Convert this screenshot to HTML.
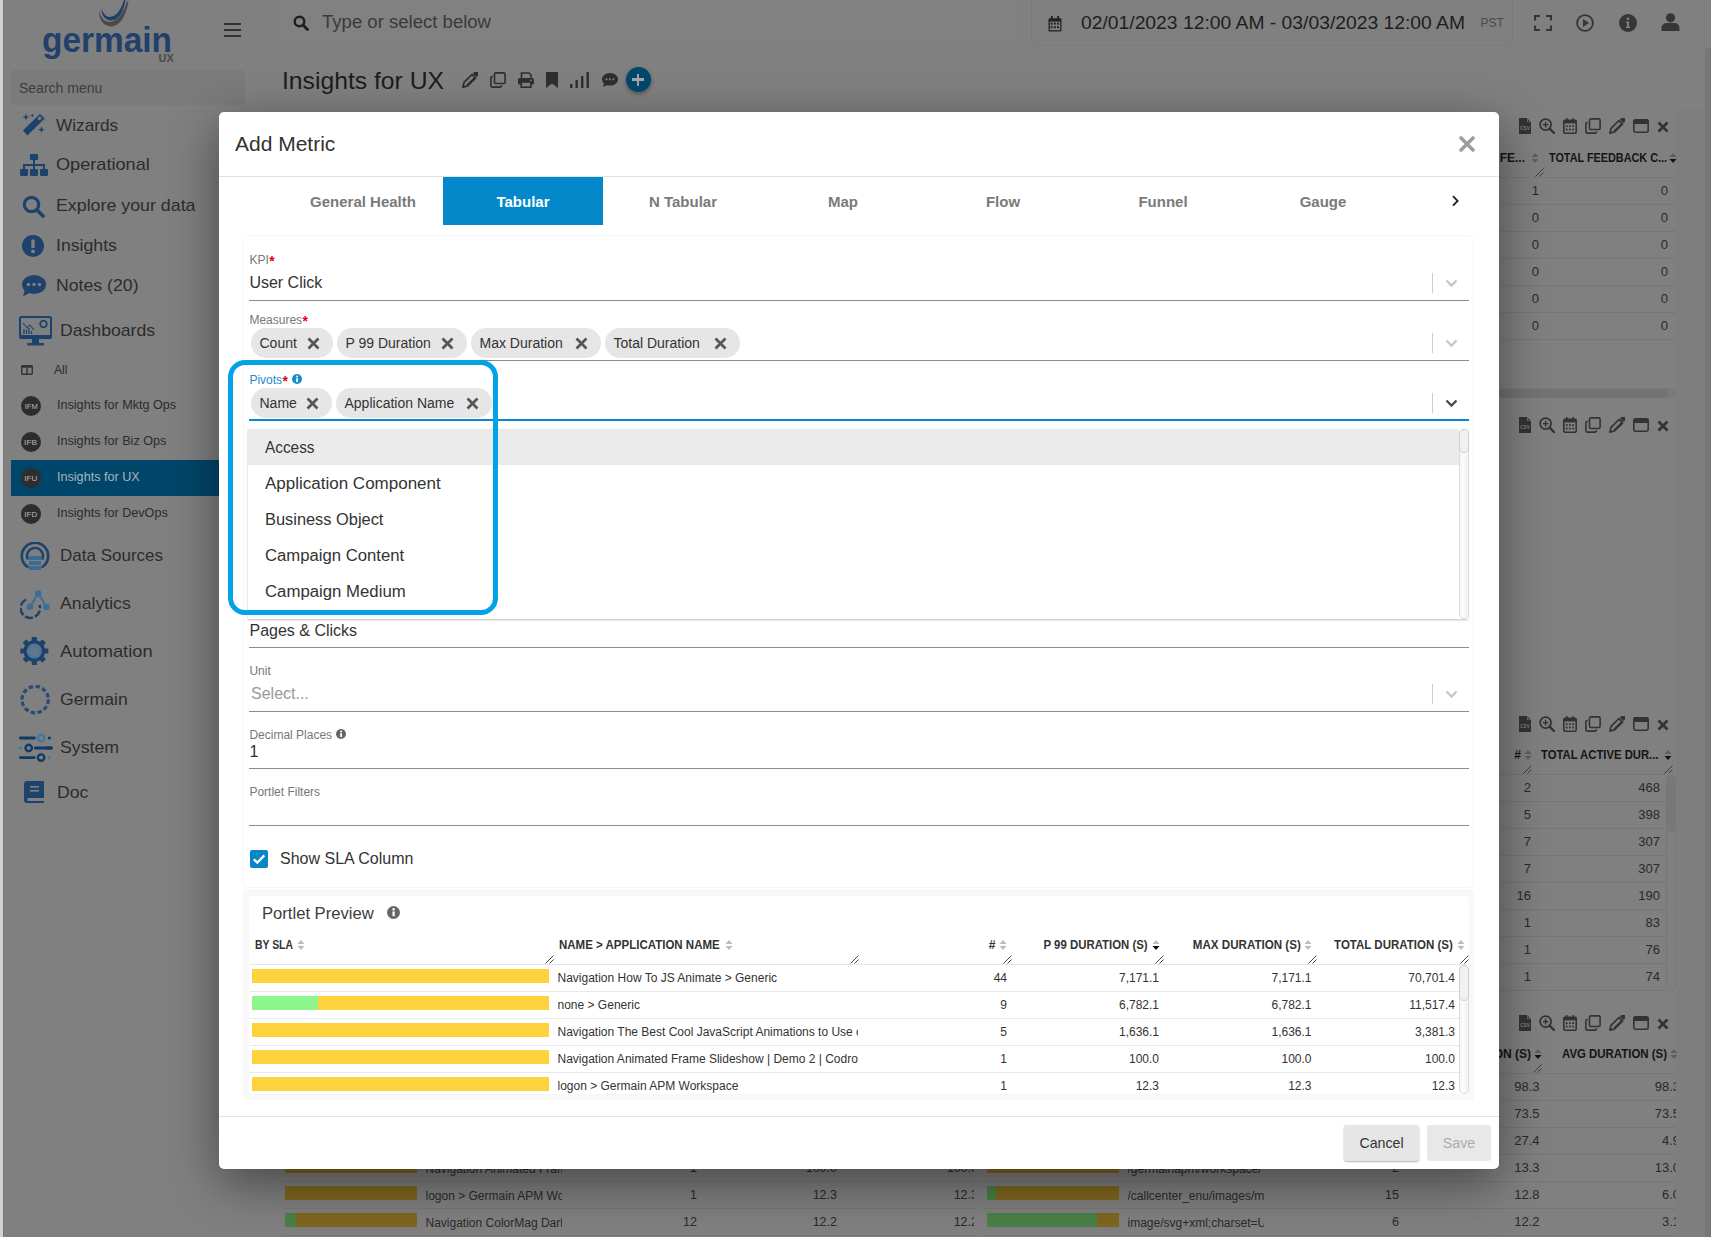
<!DOCTYPE html><html><head><meta charset="utf-8"><style>
html,body{margin:0;padding:0;width:1711px;height:1237px;overflow:hidden;background:#808080;font-family:"Liberation Sans",sans-serif;}
.r{position:absolute;display:block;}
.t{position:absolute;white-space:nowrap;line-height:1;}
#modal{position:absolute;left:219px;top:112px;width:1280px;height:1057px;background:#fff;border-radius:5px;box-shadow:0 14px 50px rgba(0,0,0,0.45);overflow:hidden;}
</style></head><body>

<div class="r" style="left:0px;top:0px;width:3px;height:1237px;background:#d0d0d0;"></div>
<div class="r" style="left:3px;top:0px;width:1px;height:1237px;background:#787878;"></div>
<svg class="r" style="left:96px;top:0px;" width="36" height="30" viewBox="0 0 36 30"><path d="M5.5 8 C5 17 11 22 18 20 C24 18 28 10 29.5 0 L28 0 C25.5 8 21.5 15 16 16.5 C10.5 18 7 14 5.5 8 Z" fill="#20406a"/><path d="M3 10 C2.5 22 10 28 18 26 C26 24 31 12 32.5 1 L31 1.5 C28 11 23 20 16 21.5 C9 23 4.5 18 3 10 Z" fill="#4a4a4a"/></svg>
<div class="t" style="left:42.00px;top:21.87px;font-size:35px;color:#21406a;font-weight:bold;transform:scaleX(0.9548);transform-origin:left top;">germain</div>
<div class="t" style="left:158.50px;top:53.19px;font-size:11px;color:#4a4a4a;font-weight:bold;">UX</div>
<div class="r" style="left:224px;top:22.8px;width:17px;height:2.3px;background:#333;"></div>
<div class="r" style="left:224px;top:28.7px;width:17px;height:2.3px;background:#333;"></div>
<div class="r" style="left:224px;top:34.6px;width:17px;height:2.3px;background:#333;"></div>
<div class="r" style="left:11px;top:70px;width:234px;height:35px;background:#7b7b7b;border-radius:4px;"></div>
<div class="t" style="left:19.00px;top:81.15px;font-size:14px;color:#3b3b3b;">Search menu</div>
<div class="t" style="left:56.30px;top:116.51px;font-size:17px;color:#2c2c2c;transform:scaleX(1.0115);transform-origin:left top;">Wizards</div>
<div class="t" style="left:56.30px;top:156.41px;font-size:17px;color:#2c2c2c;transform:scaleX(1.0673);transform-origin:left top;">Operational</div>
<div class="t" style="left:56.30px;top:197.11px;font-size:17px;color:#2c2c2c;transform:scaleX(1.0470);transform-origin:left top;">Explore your data</div>
<div class="t" style="left:56.30px;top:237.11px;font-size:17px;color:#2c2c2c;transform:scaleX(1.0400);transform-origin:left top;">Insights</div>
<div class="t" style="left:56.30px;top:277.11px;font-size:17px;color:#2c2c2c;transform:scaleX(1.0400);transform-origin:left top;">Notes (20)</div>
<div class="t" style="left:59.80px;top:321.71px;font-size:17px;color:#2c2c2c;transform:scaleX(1.0364);transform-origin:left top;">Dashboards</div>
<div class="t" style="left:59.80px;top:546.61px;font-size:17px;color:#2c2c2c;transform:scaleX(1.0001);transform-origin:left top;">Data Sources</div>
<div class="t" style="left:59.80px;top:594.71px;font-size:17px;color:#2c2c2c;transform:scaleX(1.0400);transform-origin:left top;">Analytics</div>
<div class="t" style="left:59.80px;top:642.71px;font-size:17px;color:#2c2c2c;transform:scaleX(1.0769);transform-origin:left top;">Automation</div>
<div class="t" style="left:59.80px;top:690.81px;font-size:17px;color:#2c2c2c;transform:scaleX(1.0400);transform-origin:left top;">Germain</div>
<div class="t" style="left:59.80px;top:738.91px;font-size:17px;color:#2c2c2c;transform:scaleX(1.0400);transform-origin:left top;">System</div>
<div class="t" style="left:56.80px;top:783.51px;font-size:17px;color:#2c2c2c;transform:scaleX(1.0400);transform-origin:left top;">Doc</div>
<svg class="r" style="left:22px;top:113px;" width="24" height="24" viewBox="0 0 24 24"><path d="M0.9 17.5 L5.4 22.6 L22.7 5.6 L17.9 1.1 Z" fill="#1d436c"/><path d="M15.4 5.6 L17.4 7.6 L19.9 5.2 L17.9 3.2 Z" fill="#808080"/><path d="M3.9 0.7 L4.852 3.148 L7.3 4.1 L4.852 5.052 L3.9 7.5 L2.948 5.052 L0.5 4.1 L2.948 3.148 Z M10.3 0.6 L10.86 2.04 L12.3 2.6 L10.86 3.16 L10.3 4.6 L9.74 3.16 L8.3 2.6 L9.74 2.04 Z M19.4 13.2 L20.352 15.648 L22.8 16.6 L20.352 17.552 L19.4 20 L18.448 17.552 L16 16.6 L18.448 15.648 Z" fill="#1d436c"/></svg>
<svg class="r" style="left:20px;top:154px;" width="28" height="22" viewBox="0 0 28 22"><rect x="10" y="0" width="8" height="6" rx="1" fill="#1d436c"/><path d="M14 6 V10 M4 15 V11 H24 V15 M14 11 V15" stroke="#1d436c" stroke-width="2" fill="none"/><rect x="0" y="15" width="8" height="7" rx="1" fill="#1d436c"/><rect x="10" y="15" width="8" height="7" rx="1" fill="#1d436c"/><rect x="20" y="15" width="8" height="7" rx="1" fill="#1d436c"/></svg>
<svg class="r" style="left:22px;top:195px;" width="23" height="23" viewBox="0 0 23 23"><circle cx="9.5" cy="9.5" r="7.2" fill="none" stroke="#1d436c" stroke-width="3.2"/><path d="M15 15 L21 21" stroke="#1d436c" stroke-width="3.6" stroke-linecap="round"/></svg>
<svg class="r" style="left:22px;top:235px;" width="22" height="22" viewBox="0 0 22 22"><circle cx="11" cy="11" r="11" fill="#1d436c"/><rect x="9.3" y="4.5" width="3.4" height="8.5" rx="1.2" fill="#808080"/><circle cx="11" cy="16.3" r="1.9" fill="#808080"/></svg>
<svg class="r" style="left:22px;top:275px;" width="24" height="22" viewBox="0 0 24 22"><ellipse cx="12" cy="9.5" rx="12" ry="9.5" fill="#1d436c"/><path d="M3 14 L1 21.5 L9 17 Z" fill="#1d436c"/><circle cx="6.5" cy="9.5" r="1.7" fill="#808080"/><circle cx="12" cy="9.5" r="1.7" fill="#808080"/><circle cx="17.5" cy="9.5" r="1.7" fill="#808080"/></svg>
<svg class="r" style="left:19px;top:316px;" width="33" height="30" viewBox="0 0 33 30"><rect x="1" y="1" width="31" height="21" rx="1.5" fill="none" stroke="#1d436c" stroke-width="2"/><rect x="1" y="19" width="31" height="3.5" fill="#1d436c"/><rect x="13" y="23" width="7" height="4" fill="#1d436c"/><rect x="8" y="27" width="17" height="2.5" rx="1" fill="#1d436c"/><circle cx="24.5" cy="8" r="3.3" fill="none" stroke="#1d436c" stroke-width="1.8"/><path d="M4 7 L8 12 L11 9 L15 14" stroke="#1d436c" stroke-width="1.1" fill="none"/><path d="M5 18 V13 M7.5 18 V14 M10 18 V12 M12.5 18 V15" stroke="#1d436c" stroke-width="1.3"/></svg>
<svg class="r" style="left:21px;top:365px;" width="12" height="10" viewBox="0 0 12 10"><rect x="0.7" y="0.7" width="10.6" height="8.6" rx="1" fill="none" stroke="#333" stroke-width="1.4"/><path d="M6 1 V9" stroke="#333" stroke-width="1.4"/><rect x="0.7" y="0.7" width="10.6" height="2" fill="#333"/></svg>
<div class="t" style="left:54.00px;top:364.44px;font-size:12px;color:#2c2c2c;">All</div>
<div class="r" style="left:11px;top:460px;width:208px;height:36px;background:#00466a;"></div>
<div class="r" style="left:21px;top:396px;width:20px;height:20px;border-radius:50%;background:#2d2d2d;"></div>
<div class="t" style="left:24.80px;top:402.51px;font-size:7.2px;color:#b8b8b8;transform:scaleX(1.0488);transform-origin:center top;">IFM</div>
<div class="t" style="left:57.30px;top:398.30px;font-size:13px;color:#2c2c2c;transform:scaleX(0.9700);transform-origin:left top;">Insights for Mktg Ops</div>
<div class="r" style="left:21px;top:432px;width:20px;height:20px;border-radius:50%;background:#2d2d2d;"></div>
<div class="t" style="left:25.40px;top:438.51px;font-size:7.2px;color:#b8b8b8;transform:scaleX(1.1607);transform-origin:center top;">IFB</div>
<div class="t" style="left:57.30px;top:434.30px;font-size:13px;color:#2c2c2c;transform:scaleX(0.9700);transform-origin:left top;">Insights for Biz Ops</div>
<div class="r" style="left:21px;top:468px;width:20px;height:20px;border-radius:50%;background:#2d2d2d;"></div>
<div class="t" style="left:25.20px;top:474.51px;font-size:7.2px;color:#b8b8b8;transform:scaleX(1.1209);transform-origin:center top;">IFU</div>
<div class="t" style="left:57.30px;top:470.30px;font-size:13px;color:#a9b4bb;transform:scaleX(0.9700);transform-origin:left top;">Insights for UX</div>
<div class="r" style="left:21px;top:504px;width:20px;height:20px;border-radius:50%;background:#2d2d2d;"></div>
<div class="t" style="left:25.20px;top:510.51px;font-size:7.2px;color:#b8b8b8;transform:scaleX(1.1209);transform-origin:center top;">IFD</div>
<div class="t" style="left:57.30px;top:506.30px;font-size:13px;color:#2c2c2c;transform:scaleX(0.9700);transform-origin:left top;">Insights for DevOps</div>
<svg class="r" style="left:20px;top:542px;" width="30" height="30" viewBox="0 0 30 30"><path d="M7.4 24.8 A13.2 13.2 0 1 1 22.6 24.8" fill="none" stroke="#1d436c" stroke-width="2.6" stroke-linecap="round"/><path d="M7.5 16.7 A8 8 0 1 1 22.5 16.7" fill="none" stroke="#1d436c" stroke-width="2.4" stroke-linecap="round"/><rect x="9" y="14" width="12" height="4" fill="#3a6b94"/><rect x="9" y="19" width="12" height="4" fill="#3a6b94"/><rect x="9" y="24" width="12" height="4" fill="#3a6b94"/></svg>
<svg class="r" style="left:20px;top:590px;" width="31" height="30" viewBox="0 0 31 30"><path d="M6 9.5 A9.7 9.7 0 1 0 19.5 15" fill="none" stroke="#1d436c" stroke-width="2.5" stroke-dasharray="8 2.2"/><path d="M10 16.7 L18.2 3.3 L26.4 17" fill="none" stroke="#3a6f9a" stroke-width="2"/><circle cx="18.2" cy="3.5" r="3.3" fill="#3a6f9a"/><circle cx="10" cy="16.7" r="3.3" fill="#3a6f9a"/><circle cx="26.4" cy="17" r="3.3" fill="#3a6f9a"/></svg>
<svg class="r" style="left:20px;top:637px;" width="29" height="29" viewBox="0 0 29 29"><g transform="translate(14.3 14)"><rect x="-2.6" y="-14" width="5.2" height="6" rx="0.6" fill="#1d436c" transform="rotate(0)"/><rect x="-2.6" y="-14" width="5.2" height="6" rx="0.6" fill="#1d436c" transform="rotate(45)"/><rect x="-2.6" y="-14" width="5.2" height="6" rx="0.6" fill="#1d436c" transform="rotate(90)"/><rect x="-2.6" y="-14" width="5.2" height="6" rx="0.6" fill="#1d436c" transform="rotate(135)"/><rect x="-2.6" y="-14" width="5.2" height="6" rx="0.6" fill="#1d436c" transform="rotate(180)"/><rect x="-2.6" y="-14" width="5.2" height="6" rx="0.6" fill="#1d436c" transform="rotate(225)"/><rect x="-2.6" y="-14" width="5.2" height="6" rx="0.6" fill="#1d436c" transform="rotate(270)"/><rect x="-2.6" y="-14" width="5.2" height="6" rx="0.6" fill="#1d436c" transform="rotate(315)"/><circle r="10.8" fill="#1d436c"/><circle r="7.6" fill="#62768c"/><circle r="6" fill="none" stroke="#4478a4" stroke-width="1.5" stroke-dasharray="15 4"/></g></svg>
<svg class="r" style="left:20px;top:685px;" width="31" height="30" viewBox="0 0 31 30"><circle cx="15.2" cy="14.6" r="13.2" fill="none" stroke="#284a75" stroke-width="3.2" stroke-dasharray="4.4 2.5"/></svg>
<svg class="r" style="left:18px;top:732px;" width="36" height="30" viewBox="0 0 36 30"><g stroke-linecap="round"><path d="M2.4 6 H16.4 M28.8 16 H33.6 M2.4 25.6 H16.4" stroke="#0e3a66" stroke-width="2.8"/></g><circle cx="23.1" cy="6" r="3.2" fill="none" stroke="#3f78a3" stroke-width="2.4"/><circle cx="31.4" cy="6" r="1.6" fill="#0e3a66"/><circle cx="2.5" cy="16" r="1.6" fill="#3f78a3"/><circle cx="10.7" cy="16" r="3.2" fill="none" stroke="#0e3a66" stroke-width="2.4"/><path d="M17.2 16 H33" stroke="#0e3a66" stroke-width="2.8" stroke-linecap="round"/><circle cx="23.1" cy="25.6" r="3.2" fill="none" stroke="#0e3a66" stroke-width="2.4"/><circle cx="31.4" cy="25.6" r="1.6" fill="#3f78a3"/></svg>
<svg class="r" style="left:24px;top:781px;" width="20" height="22" viewBox="0 0 20 22"><path d="M3 0 H20 V17 H4 A1.8 1.8 0 0 0 4 20 H20 V22 H3 A3 3 0 0 1 0 19 V3 A3 3 0 0 1 3 0 Z" fill="#1d436c"/><rect x="6" y="5" width="9" height="1.6" fill="#808080"/><rect x="6" y="9" width="9" height="1.6" fill="#808080"/></svg>
<div class="r" style="left:279px;top:-6px;width:743px;height:52px;background:#818181;border-radius:6px;"></div>
<svg class="r" style="left:293px;top:15px;" width="16" height="16" viewBox="0 0 16 16"><circle cx="6.5" cy="6.5" r="4.8" fill="none" stroke="#1e1e1e" stroke-width="2.4"/><path d="M10 10 L14.5 14.5" stroke="#1e1e1e" stroke-width="2.8" stroke-linecap="round"/></svg>
<div class="t" style="left:322.00px;top:13.36px;font-size:18px;color:#3a3a3a;transform:scaleX(1.0300);transform-origin:left top;">Type or select below</div>
<div class="r" style="left:1031px;top:-6px;width:482px;height:52px;border:1px solid #7a7a7a;border-radius:6px;box-sizing:border-box;"></div>
<svg class="r" style="left:1048px;top:16px;" width="14" height="16" viewBox="0 0 14 16"><rect x="0.5" y="2.2" width="13" height="13.3" rx="1.2" fill="#222"/><rect x="3" y="0" width="1.8" height="3.5" fill="#222"/><rect x="9.2" y="0" width="1.8" height="3.5" fill="#222"/><rect x="1.8" y="5.6" width="10.4" height="8.6" fill="#808080"/><rect x="2.6" y="6.6" width="2" height="2" fill="#222"/><rect x="2.6" y="10.2" width="2" height="2" fill="#222"/><rect x="5.8" y="6.6" width="2" height="2" fill="#222"/><rect x="5.8" y="10.2" width="2" height="2" fill="#222"/><rect x="9" y="6.6" width="2" height="2" fill="#222"/><rect x="9" y="10.2" width="2" height="2" fill="#222"/></svg>
<div class="t" style="left:1080.50px;top:13.42px;font-size:19px;color:#1e1e1e;transform:scaleX(1.0155);transform-origin:left top;">02/01/2023 12:00 AM - 03/03/2023 12:00 AM</div>
<div class="t" style="left:1480.60px;top:16.84px;font-size:12px;color:#4a4a4a;">PST</div>
<svg class="r" style="left:1534px;top:15px;" width="18" height="16" viewBox="0 0 18 16"><path d="M1 5.5 V1 H6 M12 1 H17 V5.5 M17 10.5 V15 H12 M6 15 H1 V10.5" fill="none" stroke="#363636" stroke-width="2.2"/></svg>
<svg class="r" style="left:1576px;top:14px;" width="18" height="18" viewBox="0 0 18 18"><circle cx="9" cy="9" r="7.9" fill="none" stroke="#363636" stroke-width="1.8"/><path d="M7 5 L13 9 L7 13 Z" fill="#363636"/></svg>
<svg class="r" style="left:1619px;top:14px;" width="18" height="18" viewBox="0 0 18 18"><circle cx="9" cy="9" r="9" fill="#363636"/><circle cx="9" cy="4.8" r="1.4" fill="#808080"/><path d="M7 7.5 H10 V12.5 H11 V14 H7 V12.5 H8 V9 H7 Z" fill="#808080"/></svg>
<svg class="r" style="left:1661px;top:13px;" width="19" height="18" viewBox="0 0 19 18"><circle cx="9.5" cy="4.8" r="4.6" fill="#363636"/><path d="M0.5 18 V15 A5 5 0 0 1 5.5 10 H13.5 A5 5 0 0 1 18.5 15 V18 Z" fill="#363636"/></svg>
<div class="r" style="left:1705px;top:48px;width:6px;height:1189px;background:#767676;border-radius:4px 0 0 0;"></div>
<div class="t" style="left:282.00px;top:68.68px;font-size:24px;color:#1c1c1c;transform:scaleX(1.0293);transform-origin:left top;">Insights for UX</div>
<svg class="r" style="left:462px;top:72px;" width="16" height="16" viewBox="0 0 16 16"><g transform="translate(0.7 15.3) rotate(-45)"><path d="M0.3 0 L4.4 -2.5 H15.6 V2.5 H4.4 Z" fill="none" stroke="#2e2e2e" stroke-width="1.7" stroke-linejoin="round"/><path d="M4.4 0.9 H15.6 V2.5 H4.4 Z" fill="#2e2e2e"/><path d="M0 0 L2.4 -1.4 V1.4 Z" fill="#2e2e2e"/><rect x="16.8" y="-2.6" width="4.8" height="5.2" rx="0.9" fill="#2e2e2e"/></g></svg>
<svg class="r" style="left:490px;top:72px;" width="16" height="16" viewBox="0 0 16 16"><rect x="4.5" y="0.9" width="10.6" height="10.6" rx="1.3" fill="none" stroke="#2e2e2e" stroke-width="1.6"/><path d="M2.8 4.5 H2.2 A1.3 1.3 0 0 0 0.9 5.8 V13.8 A1.3 1.3 0 0 0 2.2 15.1 H10.2 A1.3 1.3 0 0 0 11.5 13.8 V13.2" fill="none" stroke="#2e2e2e" stroke-width="1.6"/></svg>
<svg class="r" style="left:518px;top:72px;" width="16" height="16" viewBox="0 0 16 16"><path d="M3.5 6 V1 H11 L13 3 V6" fill="none" stroke="#2e2e2e" stroke-width="1.6"/><rect x="0" y="6" width="16" height="6.5" rx="1.5" fill="#2e2e2e"/><rect x="3.2" y="10" width="9.6" height="5.2" fill="#808080" stroke="#2e2e2e" stroke-width="1.6"/><circle cx="13" cy="8.3" r="0.9" fill="#808080"/></svg>
<svg class="r" style="left:546px;top:72px;" width="12" height="16" viewBox="0 0 12 16"><path d="M0 0 H12 V16 L6 11.5 L0 16 Z" fill="#2e2e2e"/></svg>
<svg class="r" style="left:570px;top:72px;" width="19" height="16" viewBox="0 0 19 16"><rect x="0" y="12" width="2.4" height="4" fill="#2e2e2e"/><rect x="5.5" y="8" width="2.4" height="8" fill="#2e2e2e"/><rect x="11" y="4" width="2.4" height="12" fill="#2e2e2e"/><rect x="16.5" y="0" width="2.4" height="16" fill="#2e2e2e"/></svg>
<svg class="r" style="left:602px;top:73px;" width="16" height="14" viewBox="0 0 16 14"><ellipse cx="8" cy="6.3" rx="8" ry="6.3" fill="#2e2e2e"/><path d="M2.5 9 L1 14 L6.5 11.5 Z" fill="#2e2e2e"/><circle cx="4.5" cy="6.3" r="1.1" fill="#808080"/><circle cx="8" cy="6.3" r="1.1" fill="#808080"/><circle cx="11.5" cy="6.3" r="1.1" fill="#808080"/></svg>
<div class="r" style="left:626px;top:67px;width:25px;height:25px;border-radius:50%;background:#00486d;box-shadow:0 2px 4px rgba(0,0,0,0.35);"></div>
<div class="r" style="left:636.7px;top:73.5px;width:2.6px;height:12px;background:#a6a6a6;"></div>
<div class="r" style="left:632px;top:78.2px;width:12px;height:2.6px;background:#a6a6a6;"></div>
<div class="r" style="left:1676px;top:109px;width:29px;height:1128px;background:#7e7e7e;"></div>
<svg class="r" style="left:1519px;top:118px;" width="12" height="16" viewBox="0 0 12 16"><path d="M0 0 H8 L12 4 V16 H0 Z" fill="#333"/><path d="M8 0 V4 H12" fill="#808080"/><path d="M8.6 0.8 V3.4 H11.2" fill="#333"/><text x="6" y="12.3" font-size="4.6" font-weight="bold" text-anchor="middle" fill="#808080" font-family="Liberation Sans">CSV</text></svg>
<svg class="r" style="left:1539px;top:118px;" width="16" height="16" viewBox="0 0 16 16"><circle cx="6.6" cy="6.6" r="5.5" fill="none" stroke="#333" stroke-width="1.7"/><path d="M10.6 10.6 L15 15" stroke="#333" stroke-width="2.4" stroke-linecap="round"/><path d="M6.6 3.8 V9.4 M3.8 6.6 H9.4" stroke="#333" stroke-width="1.4"/></svg>
<svg class="r" style="left:1563px;top:118px;" width="14" height="16" viewBox="0 0 14 16"><rect x="0.8" y="2.4" width="12.4" height="12.8" rx="1.2" fill="none" stroke="#333" stroke-width="1.6"/><rect x="0.8" y="2.4" width="12.4" height="3" fill="#333"/><rect x="3" y="0" width="1.6" height="3.5" fill="#333"/><rect x="9.4" y="0" width="1.6" height="3.5" fill="#333"/><rect x="2.8" y="7.3" width="1.8" height="1.8" fill="#333"/><rect x="2.8" y="10.6" width="1.8" height="1.8" fill="#333"/><rect x="6" y="7.3" width="1.8" height="1.8" fill="#333"/><rect x="6" y="10.6" width="1.8" height="1.8" fill="#333"/><rect x="9.2" y="7.3" width="1.8" height="1.8" fill="#333"/><rect x="9.2" y="10.6" width="1.8" height="1.8" fill="#333"/></svg>
<svg class="r" style="left:1585px;top:118px;" width="16" height="16" viewBox="0 0 16 16"><rect x="4.5" y="0.9" width="10.6" height="10.6" rx="1.3" fill="none" stroke="#333" stroke-width="1.6"/><path d="M2.8 4.5 H2.2 A1.3 1.3 0 0 0 0.9 5.8 V13.8 A1.3 1.3 0 0 0 2.2 15.1 H10.2 A1.3 1.3 0 0 0 11.5 13.8 V13.2" fill="none" stroke="#333" stroke-width="1.6"/></svg>
<svg class="r" style="left:1609px;top:118px;" width="16" height="16" viewBox="0 0 16 16"><g transform="translate(0.7 15.3) rotate(-45)"><path d="M0.3 0 L4.4 -2.5 H15.6 V2.5 H4.4 Z" fill="none" stroke="#333" stroke-width="1.7" stroke-linejoin="round"/><path d="M4.4 0.9 H15.6 V2.5 H4.4 Z" fill="#333"/><path d="M0 0 L2.4 -1.4 V1.4 Z" fill="#333"/><rect x="16.8" y="-2.6" width="4.8" height="5.2" rx="0.9" fill="#333"/></g></svg>
<svg class="r" style="left:1633px;top:119px;" width="16" height="14" viewBox="0 0 16 14"><rect x="0.8" y="0.8" width="14.4" height="12.4" rx="1.6" fill="none" stroke="#333" stroke-width="1.6"/><rect x="0.8" y="0.8" width="14.4" height="4.2" rx="1" fill="#333"/></svg>
<svg class="r" style="left:1656.5px;top:120.5px;" width="12" height="12" viewBox="0 0 16 16"><path d="M2 2 L14 14 M14 2 L2 14" stroke="#333" stroke-width="3.6" stroke-linecap="butt"/></svg>
<div class="t" style="left:1488.33px;top:151.84px;font-size:12px;color:#151515;font-weight:bold;">E FE...</div>
<svg class="r" style="left:1531px;top:152px;" width="8" height="12" viewBox="0 0 8 12"><path d="M0.5 5 L4 1 L7.5 5 Z" fill="#5e5e5e"/><path d="M0.5 7 L4 11 L7.5 7 Z" fill="#5e5e5e"/></svg>
<div class="t" style="left:1549.00px;top:151.84px;font-size:12px;color:#151515;font-weight:bold;transform:scaleX(0.9031);transform-origin:left top;">TOTAL FEEDBACK C...</div>
<svg class="r" style="left:1669px;top:152px;" width="8" height="12" viewBox="0 0 8 12"><path d="M0.5 5 L4 1 L7.5 5 Z" fill="#5e5e5e"/><path d="M0.5 7 L4 11 L7.5 7 Z" fill="#111"/></svg>
<svg class="r" style="left:1535px;top:168px;" width="9" height="9" viewBox="0 0 9 9"><path d="M0.5 8.5 L8.5 0.5 M4.5 8.5 L8.5 4.5" stroke="#333" stroke-width="0.9"/></svg>
<div class="r" style="left:1499px;top:177px;width:177px;height:1px;background:#777777;"></div>
<div class="t" style="left:1531.77px;top:183.50px;font-size:13px;color:#2a2a2a;">1</div>
<div class="t" style="left:1660.77px;top:183.50px;font-size:13px;color:#2a2a2a;">0</div>
<div class="r" style="left:1499px;top:204px;width:177px;height:1px;background:#777777;"></div>
<div class="t" style="left:1531.77px;top:210.50px;font-size:13px;color:#2a2a2a;">0</div>
<div class="t" style="left:1660.77px;top:210.50px;font-size:13px;color:#2a2a2a;">0</div>
<div class="r" style="left:1499px;top:231px;width:177px;height:1px;background:#777777;"></div>
<div class="t" style="left:1531.77px;top:237.50px;font-size:13px;color:#2a2a2a;">0</div>
<div class="t" style="left:1660.77px;top:237.50px;font-size:13px;color:#2a2a2a;">0</div>
<div class="r" style="left:1499px;top:258px;width:177px;height:1px;background:#777777;"></div>
<div class="t" style="left:1531.77px;top:264.50px;font-size:13px;color:#2a2a2a;">0</div>
<div class="t" style="left:1660.77px;top:264.50px;font-size:13px;color:#2a2a2a;">0</div>
<div class="r" style="left:1499px;top:285px;width:177px;height:1px;background:#777777;"></div>
<div class="t" style="left:1531.77px;top:291.50px;font-size:13px;color:#2a2a2a;">0</div>
<div class="t" style="left:1660.77px;top:291.50px;font-size:13px;color:#2a2a2a;">0</div>
<div class="r" style="left:1499px;top:312px;width:177px;height:1px;background:#777777;"></div>
<div class="t" style="left:1531.77px;top:318.50px;font-size:13px;color:#2a2a2a;">0</div>
<div class="t" style="left:1660.77px;top:318.50px;font-size:13px;color:#2a2a2a;">0</div>
<div class="r" style="left:1499px;top:339px;width:177px;height:1px;background:#777777;"></div>
<div class="r" style="left:1499px;top:388px;width:177px;height:10px;background:#7a7a7a;border-radius:5px;"></div>
<div class="r" style="left:1499px;top:388.5px;width:169px;height:9px;background:#737373;border-radius:5px;"></div>
<div class="r" style="left:1499px;top:408px;width:177px;height:1px;background:#7d7d7d;"></div>
<svg class="r" style="left:1519px;top:417px;" width="12" height="16" viewBox="0 0 12 16"><path d="M0 0 H8 L12 4 V16 H0 Z" fill="#333"/><path d="M8 0 V4 H12" fill="#808080"/><path d="M8.6 0.8 V3.4 H11.2" fill="#333"/><text x="6" y="12.3" font-size="4.6" font-weight="bold" text-anchor="middle" fill="#808080" font-family="Liberation Sans">CSV</text></svg>
<svg class="r" style="left:1539px;top:417px;" width="16" height="16" viewBox="0 0 16 16"><circle cx="6.6" cy="6.6" r="5.5" fill="none" stroke="#333" stroke-width="1.7"/><path d="M10.6 10.6 L15 15" stroke="#333" stroke-width="2.4" stroke-linecap="round"/><path d="M6.6 3.8 V9.4 M3.8 6.6 H9.4" stroke="#333" stroke-width="1.4"/></svg>
<svg class="r" style="left:1563px;top:417px;" width="14" height="16" viewBox="0 0 14 16"><rect x="0.8" y="2.4" width="12.4" height="12.8" rx="1.2" fill="none" stroke="#333" stroke-width="1.6"/><rect x="0.8" y="2.4" width="12.4" height="3" fill="#333"/><rect x="3" y="0" width="1.6" height="3.5" fill="#333"/><rect x="9.4" y="0" width="1.6" height="3.5" fill="#333"/><rect x="2.8" y="7.3" width="1.8" height="1.8" fill="#333"/><rect x="2.8" y="10.6" width="1.8" height="1.8" fill="#333"/><rect x="6" y="7.3" width="1.8" height="1.8" fill="#333"/><rect x="6" y="10.6" width="1.8" height="1.8" fill="#333"/><rect x="9.2" y="7.3" width="1.8" height="1.8" fill="#333"/><rect x="9.2" y="10.6" width="1.8" height="1.8" fill="#333"/></svg>
<svg class="r" style="left:1585px;top:417px;" width="16" height="16" viewBox="0 0 16 16"><rect x="4.5" y="0.9" width="10.6" height="10.6" rx="1.3" fill="none" stroke="#333" stroke-width="1.6"/><path d="M2.8 4.5 H2.2 A1.3 1.3 0 0 0 0.9 5.8 V13.8 A1.3 1.3 0 0 0 2.2 15.1 H10.2 A1.3 1.3 0 0 0 11.5 13.8 V13.2" fill="none" stroke="#333" stroke-width="1.6"/></svg>
<svg class="r" style="left:1609px;top:417px;" width="16" height="16" viewBox="0 0 16 16"><g transform="translate(0.7 15.3) rotate(-45)"><path d="M0.3 0 L4.4 -2.5 H15.6 V2.5 H4.4 Z" fill="none" stroke="#333" stroke-width="1.7" stroke-linejoin="round"/><path d="M4.4 0.9 H15.6 V2.5 H4.4 Z" fill="#333"/><path d="M0 0 L2.4 -1.4 V1.4 Z" fill="#333"/><rect x="16.8" y="-2.6" width="4.8" height="5.2" rx="0.9" fill="#333"/></g></svg>
<svg class="r" style="left:1633px;top:418px;" width="16" height="14" viewBox="0 0 16 14"><rect x="0.8" y="0.8" width="14.4" height="12.4" rx="1.6" fill="none" stroke="#333" stroke-width="1.6"/><rect x="0.8" y="0.8" width="14.4" height="4.2" rx="1" fill="#333"/></svg>
<svg class="r" style="left:1656.5px;top:419.5px;" width="12" height="12" viewBox="0 0 16 16"><path d="M2 2 L14 14 M14 2 L2 14" stroke="#333" stroke-width="3.6" stroke-linecap="butt"/></svg>
<div class="r" style="left:1499px;top:696px;width:177px;height:1px;background:#7d7d7d;"></div>
<svg class="r" style="left:1519px;top:716px;" width="12" height="16" viewBox="0 0 12 16"><path d="M0 0 H8 L12 4 V16 H0 Z" fill="#333"/><path d="M8 0 V4 H12" fill="#808080"/><path d="M8.6 0.8 V3.4 H11.2" fill="#333"/><text x="6" y="12.3" font-size="4.6" font-weight="bold" text-anchor="middle" fill="#808080" font-family="Liberation Sans">CSV</text></svg>
<svg class="r" style="left:1539px;top:716px;" width="16" height="16" viewBox="0 0 16 16"><circle cx="6.6" cy="6.6" r="5.5" fill="none" stroke="#333" stroke-width="1.7"/><path d="M10.6 10.6 L15 15" stroke="#333" stroke-width="2.4" stroke-linecap="round"/><path d="M6.6 3.8 V9.4 M3.8 6.6 H9.4" stroke="#333" stroke-width="1.4"/></svg>
<svg class="r" style="left:1563px;top:716px;" width="14" height="16" viewBox="0 0 14 16"><rect x="0.8" y="2.4" width="12.4" height="12.8" rx="1.2" fill="none" stroke="#333" stroke-width="1.6"/><rect x="0.8" y="2.4" width="12.4" height="3" fill="#333"/><rect x="3" y="0" width="1.6" height="3.5" fill="#333"/><rect x="9.4" y="0" width="1.6" height="3.5" fill="#333"/><rect x="2.8" y="7.3" width="1.8" height="1.8" fill="#333"/><rect x="2.8" y="10.6" width="1.8" height="1.8" fill="#333"/><rect x="6" y="7.3" width="1.8" height="1.8" fill="#333"/><rect x="6" y="10.6" width="1.8" height="1.8" fill="#333"/><rect x="9.2" y="7.3" width="1.8" height="1.8" fill="#333"/><rect x="9.2" y="10.6" width="1.8" height="1.8" fill="#333"/></svg>
<svg class="r" style="left:1585px;top:716px;" width="16" height="16" viewBox="0 0 16 16"><rect x="4.5" y="0.9" width="10.6" height="10.6" rx="1.3" fill="none" stroke="#333" stroke-width="1.6"/><path d="M2.8 4.5 H2.2 A1.3 1.3 0 0 0 0.9 5.8 V13.8 A1.3 1.3 0 0 0 2.2 15.1 H10.2 A1.3 1.3 0 0 0 11.5 13.8 V13.2" fill="none" stroke="#333" stroke-width="1.6"/></svg>
<svg class="r" style="left:1609px;top:716px;" width="16" height="16" viewBox="0 0 16 16"><g transform="translate(0.7 15.3) rotate(-45)"><path d="M0.3 0 L4.4 -2.5 H15.6 V2.5 H4.4 Z" fill="none" stroke="#333" stroke-width="1.7" stroke-linejoin="round"/><path d="M4.4 0.9 H15.6 V2.5 H4.4 Z" fill="#333"/><path d="M0 0 L2.4 -1.4 V1.4 Z" fill="#333"/><rect x="16.8" y="-2.6" width="4.8" height="5.2" rx="0.9" fill="#333"/></g></svg>
<svg class="r" style="left:1633px;top:717px;" width="16" height="14" viewBox="0 0 16 14"><rect x="0.8" y="0.8" width="14.4" height="12.4" rx="1.6" fill="none" stroke="#333" stroke-width="1.6"/><rect x="0.8" y="0.8" width="14.4" height="4.2" rx="1" fill="#333"/></svg>
<svg class="r" style="left:1656.5px;top:718.5px;" width="12" height="12" viewBox="0 0 16 16"><path d="M2 2 L14 14 M14 2 L2 14" stroke="#333" stroke-width="3.6" stroke-linecap="butt"/></svg>
<div class="t" style="left:1514.33px;top:748.84px;font-size:12px;color:#151515;font-weight:bold;">#</div>
<svg class="r" style="left:1524px;top:749px;" width="8" height="12" viewBox="0 0 8 12"><path d="M0.5 5 L4 1 L7.5 5 Z" fill="#5e5e5e"/><path d="M0.5 7 L4 11 L7.5 7 Z" fill="#5e5e5e"/></svg>
<div class="t" style="left:1541.00px;top:748.84px;font-size:12px;color:#151515;font-weight:bold;transform:scaleX(0.9408);transform-origin:left top;">TOTAL ACTIVE DUR...</div>
<svg class="r" style="left:1664px;top:749px;" width="8" height="12" viewBox="0 0 8 12"><path d="M0.5 5 L4 1 L7.5 5 Z" fill="#5e5e5e"/><path d="M0.5 7 L4 11 L7.5 7 Z" fill="#111"/></svg>
<svg class="r" style="left:1523px;top:765px;" width="9" height="9" viewBox="0 0 9 9"><path d="M0.5 8.5 L8.5 0.5 M4.5 8.5 L8.5 4.5" stroke="#333" stroke-width="0.9"/></svg>
<svg class="r" style="left:1664px;top:765px;" width="9" height="9" viewBox="0 0 9 9"><path d="M0.5 8.5 L8.5 0.5 M4.5 8.5 L8.5 4.5" stroke="#333" stroke-width="0.9"/></svg>
<div class="r" style="left:1499px;top:774px;width:167px;height:1px;background:#777777;"></div>
<div class="t" style="left:1523.77px;top:781.00px;font-size:13px;color:#2a2a2a;">2</div>
<div class="t" style="left:1638.31px;top:781.00px;font-size:13px;color:#2a2a2a;">468</div>
<div class="r" style="left:1499px;top:801px;width:167px;height:1px;background:#777777;"></div>
<div class="t" style="left:1523.77px;top:808.00px;font-size:13px;color:#2a2a2a;">5</div>
<div class="t" style="left:1638.31px;top:808.00px;font-size:13px;color:#2a2a2a;">398</div>
<div class="r" style="left:1499px;top:828px;width:167px;height:1px;background:#777777;"></div>
<div class="t" style="left:1523.77px;top:835.00px;font-size:13px;color:#2a2a2a;">7</div>
<div class="t" style="left:1638.31px;top:835.00px;font-size:13px;color:#2a2a2a;">307</div>
<div class="r" style="left:1499px;top:855px;width:167px;height:1px;background:#777777;"></div>
<div class="t" style="left:1523.77px;top:862.00px;font-size:13px;color:#2a2a2a;">7</div>
<div class="t" style="left:1638.31px;top:862.00px;font-size:13px;color:#2a2a2a;">307</div>
<div class="r" style="left:1499px;top:882px;width:167px;height:1px;background:#777777;"></div>
<div class="t" style="left:1516.54px;top:889.00px;font-size:13px;color:#2a2a2a;">16</div>
<div class="t" style="left:1638.31px;top:889.00px;font-size:13px;color:#2a2a2a;">190</div>
<div class="r" style="left:1499px;top:909px;width:167px;height:1px;background:#777777;"></div>
<div class="t" style="left:1523.77px;top:916.00px;font-size:13px;color:#2a2a2a;">1</div>
<div class="t" style="left:1645.54px;top:916.00px;font-size:13px;color:#2a2a2a;">83</div>
<div class="r" style="left:1499px;top:936px;width:167px;height:1px;background:#777777;"></div>
<div class="t" style="left:1523.77px;top:943.00px;font-size:13px;color:#2a2a2a;">1</div>
<div class="t" style="left:1645.54px;top:943.00px;font-size:13px;color:#2a2a2a;">76</div>
<div class="r" style="left:1499px;top:963px;width:167px;height:1px;background:#777777;"></div>
<div class="t" style="left:1523.77px;top:970.00px;font-size:13px;color:#2a2a2a;">1</div>
<div class="t" style="left:1645.54px;top:970.00px;font-size:13px;color:#2a2a2a;">74</div>
<div class="r" style="left:1499px;top:990px;width:167px;height:1px;background:#777777;"></div>
<div class="r" style="left:1666px;top:775px;width:10px;height:216px;border:1px solid #777;border-radius:5px;box-sizing:border-box;"></div>
<div class="r" style="left:1667px;top:776px;width:8px;height:56px;background:#787878;border-radius:4px;"></div>
<div class="r" style="left:1499px;top:995px;width:177px;height:1px;background:#7d7d7d;"></div>
<svg class="r" style="left:1519px;top:1015px;" width="12" height="16" viewBox="0 0 12 16"><path d="M0 0 H8 L12 4 V16 H0 Z" fill="#333"/><path d="M8 0 V4 H12" fill="#808080"/><path d="M8.6 0.8 V3.4 H11.2" fill="#333"/><text x="6" y="12.3" font-size="4.6" font-weight="bold" text-anchor="middle" fill="#808080" font-family="Liberation Sans">CSV</text></svg>
<svg class="r" style="left:1539px;top:1015px;" width="16" height="16" viewBox="0 0 16 16"><circle cx="6.6" cy="6.6" r="5.5" fill="none" stroke="#333" stroke-width="1.7"/><path d="M10.6 10.6 L15 15" stroke="#333" stroke-width="2.4" stroke-linecap="round"/><path d="M6.6 3.8 V9.4 M3.8 6.6 H9.4" stroke="#333" stroke-width="1.4"/></svg>
<svg class="r" style="left:1563px;top:1015px;" width="14" height="16" viewBox="0 0 14 16"><rect x="0.8" y="2.4" width="12.4" height="12.8" rx="1.2" fill="none" stroke="#333" stroke-width="1.6"/><rect x="0.8" y="2.4" width="12.4" height="3" fill="#333"/><rect x="3" y="0" width="1.6" height="3.5" fill="#333"/><rect x="9.4" y="0" width="1.6" height="3.5" fill="#333"/><rect x="2.8" y="7.3" width="1.8" height="1.8" fill="#333"/><rect x="2.8" y="10.6" width="1.8" height="1.8" fill="#333"/><rect x="6" y="7.3" width="1.8" height="1.8" fill="#333"/><rect x="6" y="10.6" width="1.8" height="1.8" fill="#333"/><rect x="9.2" y="7.3" width="1.8" height="1.8" fill="#333"/><rect x="9.2" y="10.6" width="1.8" height="1.8" fill="#333"/></svg>
<svg class="r" style="left:1585px;top:1015px;" width="16" height="16" viewBox="0 0 16 16"><rect x="4.5" y="0.9" width="10.6" height="10.6" rx="1.3" fill="none" stroke="#333" stroke-width="1.6"/><path d="M2.8 4.5 H2.2 A1.3 1.3 0 0 0 0.9 5.8 V13.8 A1.3 1.3 0 0 0 2.2 15.1 H10.2 A1.3 1.3 0 0 0 11.5 13.8 V13.2" fill="none" stroke="#333" stroke-width="1.6"/></svg>
<svg class="r" style="left:1609px;top:1015px;" width="16" height="16" viewBox="0 0 16 16"><g transform="translate(0.7 15.3) rotate(-45)"><path d="M0.3 0 L4.4 -2.5 H15.6 V2.5 H4.4 Z" fill="none" stroke="#333" stroke-width="1.7" stroke-linejoin="round"/><path d="M4.4 0.9 H15.6 V2.5 H4.4 Z" fill="#333"/><path d="M0 0 L2.4 -1.4 V1.4 Z" fill="#333"/><rect x="16.8" y="-2.6" width="4.8" height="5.2" rx="0.9" fill="#333"/></g></svg>
<svg class="r" style="left:1633px;top:1016px;" width="16" height="14" viewBox="0 0 16 14"><rect x="0.8" y="0.8" width="14.4" height="12.4" rx="1.6" fill="none" stroke="#333" stroke-width="1.6"/><rect x="0.8" y="0.8" width="14.4" height="4.2" rx="1" fill="#333"/></svg>
<svg class="r" style="left:1656.5px;top:1017.5px;" width="12" height="12" viewBox="0 0 16 16"><path d="M2 2 L14 14 M14 2 L2 14" stroke="#333" stroke-width="3.6" stroke-linecap="butt"/></svg>
<div class="t" style="left:1493.67px;top:1047.84px;font-size:12px;color:#151515;font-weight:bold;">ON (S)</div>
<svg class="r" style="left:1534px;top:1048px;" width="8" height="12" viewBox="0 0 8 12"><path d="M0.5 5 L4 1 L7.5 5 Z" fill="#5e5e5e"/><path d="M0.5 7 L4 11 L7.5 7 Z" fill="#111"/></svg>
<div class="t" style="left:1562.00px;top:1047.84px;font-size:12px;color:#151515;font-weight:bold;transform:scaleX(0.9527);transform-origin:left top;">AVG DURATION (S)</div>
<svg class="r" style="left:1670px;top:1048px;" width="8" height="12" viewBox="0 0 8 12"><path d="M0.5 5 L4 1 L7.5 5 Z" fill="#5e5e5e"/><path d="M0.5 7 L4 11 L7.5 7 Z" fill="#5e5e5e"/></svg>
<svg class="r" style="left:1533px;top:1064px;" width="9" height="9" viewBox="0 0 9 9"><path d="M0.5 8.5 L8.5 0.5 M4.5 8.5 L8.5 4.5" stroke="#333" stroke-width="0.9"/></svg>
<div class="r" style="left:1499px;top:1073px;width:177px;height:1px;background:#777777;"></div>
<div class="t" style="left:1514.20px;top:1080.00px;font-size:13px;color:#2a2a2a;">98.3</div>
<div class="t" style="left:1654.70px;top:1080.00px;font-size:13px;color:#2a2a2a;">98.3</div>
<div class="r" style="left:1499px;top:1100px;width:177px;height:1px;background:#777777;"></div>
<div class="t" style="left:1514.20px;top:1107.00px;font-size:13px;color:#2a2a2a;">73.5</div>
<div class="t" style="left:1654.70px;top:1107.00px;font-size:13px;color:#2a2a2a;">73.5</div>
<div class="r" style="left:1499px;top:1127px;width:177px;height:1px;background:#777777;"></div>
<div class="t" style="left:1514.20px;top:1134.00px;font-size:13px;color:#2a2a2a;">27.4</div>
<div class="t" style="left:1661.93px;top:1134.00px;font-size:13px;color:#2a2a2a;">4.9</div>
<div class="r" style="left:1499px;top:1154px;width:177px;height:1px;background:#777777;"></div>
<div class="t" style="left:1514.20px;top:1161.00px;font-size:13px;color:#2a2a2a;">13.3</div>
<div class="t" style="left:1654.70px;top:1161.00px;font-size:13px;color:#2a2a2a;">13.0</div>
<div class="r" style="left:1499px;top:1181px;width:177px;height:1px;background:#777777;"></div>
<div class="t" style="left:1514.20px;top:1188.00px;font-size:13px;color:#2a2a2a;">12.8</div>
<div class="t" style="left:1661.93px;top:1188.00px;font-size:13px;color:#2a2a2a;">6.0</div>
<div class="r" style="left:1499px;top:1208px;width:177px;height:1px;background:#777777;"></div>
<div class="t" style="left:1514.20px;top:1215.00px;font-size:13px;color:#2a2a2a;">12.2</div>
<div class="t" style="left:1661.93px;top:1215.00px;font-size:13px;color:#2a2a2a;">3.1</div>
<div class="r" style="left:1499px;top:1235px;width:177px;height:1px;background:#777777;"></div>
<div class="r" style="left:1676px;top:1075px;width:29px;height:162px;background:#7e7e7e;"></div>
<div class="r" style="left:285px;top:1159px;width:132px;height:14px;background:#7f6720;"></div>
<div class="t" style="left:425.50px;top:1162.84px;font-size:12px;color:#2a2a2a;width:136.50px;height:1.45em;overflow:hidden;">Navigation Animated Fram</div>
<div class="t" style="left:690.05px;top:1162.42px;font-size:12.5px;color:#2a2a2a;">1</div>
<div class="t" style="left:805.72px;top:1162.42px;font-size:12.5px;color:#2a2a2a;">100.0</div>
<div class="t" style="left:946.72px;top:1162.42px;font-size:12.5px;color:#2a2a2a;width:27.78px;height:1.45em;overflow:hidden;">100.0</div>
<div class="r" style="left:987px;top:1159px;width:132px;height:14px;background:#7f6720;"></div>
<div class="t" style="left:1127.50px;top:1162.84px;font-size:12px;color:#2a2a2a;width:136.50px;height:1.45em;overflow:hidden;">/germainapm/workspace/</div>
<div class="t" style="left:1392.05px;top:1162.42px;font-size:12.5px;color:#2a2a2a;">2</div>
<div class="r" style="left:282px;top:1181px;width:694px;height:1px;background:#777777;"></div>
<div class="r" style="left:980px;top:1181px;width:696px;height:1px;background:#777777;"></div>
<div class="r" style="left:285px;top:1186px;width:132px;height:14px;background:#7f6720;"></div>
<div class="t" style="left:425.50px;top:1189.84px;font-size:12px;color:#2a2a2a;width:136.50px;height:1.45em;overflow:hidden;">logon &gt; Germain APM Wo</div>
<div class="t" style="left:690.05px;top:1189.42px;font-size:12.5px;color:#2a2a2a;">1</div>
<div class="t" style="left:812.67px;top:1189.42px;font-size:12.5px;color:#2a2a2a;">12.3</div>
<div class="t" style="left:953.67px;top:1189.42px;font-size:12.5px;color:#2a2a2a;width:20.83px;height:1.45em;overflow:hidden;">12.3</div>
<div class="r" style="left:987px;top:1186px;width:132px;height:14px;background:#7f6720;"></div>
<div class="r" style="left:987px;top:1186px;width:9px;height:14px;background:#4b8046;"></div>
<div class="t" style="left:1127.50px;top:1189.84px;font-size:12px;color:#2a2a2a;width:136.50px;height:1.45em;overflow:hidden;">/callcenter_enu/images/m</div>
<div class="t" style="left:1385.10px;top:1189.42px;font-size:12.5px;color:#2a2a2a;">15</div>
<div class="r" style="left:282px;top:1208px;width:694px;height:1px;background:#777777;"></div>
<div class="r" style="left:980px;top:1208px;width:696px;height:1px;background:#777777;"></div>
<div class="r" style="left:285px;top:1213px;width:132px;height:14px;background:#7f6720;"></div>
<div class="r" style="left:285px;top:1213px;width:11px;height:14px;background:#4b8046;"></div>
<div class="t" style="left:425.50px;top:1216.84px;font-size:12px;color:#2a2a2a;width:136.50px;height:1.45em;overflow:hidden;">Navigation ColorMag Darl</div>
<div class="t" style="left:683.10px;top:1216.42px;font-size:12.5px;color:#2a2a2a;">12</div>
<div class="t" style="left:812.67px;top:1216.42px;font-size:12.5px;color:#2a2a2a;">12.2</div>
<div class="t" style="left:953.67px;top:1216.42px;font-size:12.5px;color:#2a2a2a;width:20.83px;height:1.45em;overflow:hidden;">12.2</div>
<div class="r" style="left:987px;top:1213px;width:132px;height:14px;background:#7f6720;"></div>
<div class="r" style="left:987px;top:1213px;width:110px;height:14px;background:#4b8046;"></div>
<div class="t" style="left:1127.50px;top:1216.84px;font-size:12px;color:#2a2a2a;width:136.50px;height:1.45em;overflow:hidden;">image/svg+xml;charset=U</div>
<div class="t" style="left:1392.05px;top:1216.42px;font-size:12.5px;color:#2a2a2a;">6</div>
<div class="r" style="left:282px;top:1235px;width:694px;height:1px;background:#777777;"></div>
<div class="r" style="left:980px;top:1235px;width:696px;height:1px;background:#777777;"></div>
<div id="modal"></div>
<div class="t" style="left:235.00px;top:133.22px;font-size:21px;color:#333;">Add Metric</div>
<svg class="r" style="left:1458px;top:135px;" width="18" height="18" viewBox="0 0 18 18"><path d="M3 3 L15 15 M15 3 L3 15" stroke="#9c9c9c" stroke-width="3.6" stroke-linecap="round"/></svg>
<div class="r" style="left:219px;top:176px;width:1280px;height:1px;background:#e3e3e3;"></div>
<div class="r" style="left:443px;top:177px;width:160px;height:48px;background:#0389ca;"></div>
<div class="t" style="left:310.07px;top:193.70px;font-size:15px;color:#7a7a7a;font-weight:bold;">General Health</div>
<div class="t" style="left:496.47px;top:193.70px;font-size:15px;color:#fff;font-weight:bold;">Tabular</div>
<div class="t" style="left:648.97px;top:193.70px;font-size:15px;color:#7a7a7a;font-weight:bold;">N Tabular</div>
<div class="t" style="left:828.00px;top:193.70px;font-size:15px;color:#7a7a7a;font-weight:bold;">Map</div>
<div class="t" style="left:985.92px;top:193.70px;font-size:15px;color:#7a7a7a;font-weight:bold;">Flow</div>
<div class="t" style="left:1138.42px;top:193.70px;font-size:15px;color:#7a7a7a;font-weight:bold;">Funnel</div>
<div class="t" style="left:1299.66px;top:193.70px;font-size:15px;color:#7a7a7a;font-weight:bold;">Gauge</div>
<svg class="r" style="left:1451px;top:195px;" width="9" height="12" viewBox="0 0 9 12"><path d="M2 1.2 L6.6 5.9 L2 10.6" fill="none" stroke="#222" stroke-width="1.9"/></svg>
<div class="r" style="left:243px;top:235px;width:1231px;height:653px;border:1px solid #f6f6f6;border-radius:5px;box-sizing:border-box;"></div>
<div class="t" style="left:249.40px;top:253.84px;font-size:12px;color:#777;">KPI</div>
<div class="t" style="left:269.24px;top:253.65px;font-size:14px;color:#e3001b;font-weight:bold;">*</div>
<div class="t" style="left:249.40px;top:275.46px;font-size:16px;color:#333;">User Click</div>
<div class="r" style="left:249px;top:300px;width:1220px;height:1px;background:#8c8c8c;"></div>
<div class="r" style="left:1432px;top:273px;width:1px;height:20px;background:#cccccc;"></div>
<svg class="r" style="left:1444.5px;top:279px;" width="13" height="9" viewBox="0 0 13 9"><path d="M1.5 1.5 L6.5 6.5 L11.5 1.5" fill="none" stroke="#c6c6c6" stroke-width="2.3"/></svg>
<div class="t" style="left:249.40px;top:313.84px;font-size:12px;color:#777;">Measures</div>
<div class="t" style="left:302.58px;top:313.65px;font-size:14px;color:#e3001b;font-weight:bold;">*</div>
<div class="r" style="left:251px;top:328px;width:82px;height:30px;border-radius:15px;background:#e6e6e6;"></div>
<div class="t" style="left:259.50px;top:336.15px;font-size:14px;color:#333;">Count</div>
<svg class="r" style="left:307px;top:336.5px;" width="13" height="13" viewBox="0 0 13 13"><path d="M1.5 1.5 L11.5 11.5 M11.5 1.5 L1.5 11.5" stroke="#555" stroke-width="2.7"/></svg>
<div class="r" style="left:337px;top:328px;width:130px;height:30px;border-radius:15px;background:#e6e6e6;"></div>
<div class="t" style="left:345.50px;top:336.15px;font-size:14px;color:#333;">P 99 Duration</div>
<svg class="r" style="left:441px;top:336.5px;" width="13" height="13" viewBox="0 0 13 13"><path d="M1.5 1.5 L11.5 11.5 M11.5 1.5 L1.5 11.5" stroke="#555" stroke-width="2.7"/></svg>
<div class="r" style="left:471px;top:328px;width:130px;height:30px;border-radius:15px;background:#e6e6e6;"></div>
<div class="t" style="left:479.50px;top:336.15px;font-size:14px;color:#333;">Max Duration</div>
<svg class="r" style="left:575px;top:336.5px;" width="13" height="13" viewBox="0 0 13 13"><path d="M1.5 1.5 L11.5 11.5 M11.5 1.5 L1.5 11.5" stroke="#555" stroke-width="2.7"/></svg>
<div class="r" style="left:605px;top:328px;width:135px;height:30px;border-radius:15px;background:#e6e6e6;"></div>
<div class="t" style="left:613.50px;top:336.15px;font-size:14px;color:#333;">Total Duration</div>
<svg class="r" style="left:714px;top:336.5px;" width="13" height="13" viewBox="0 0 13 13"><path d="M1.5 1.5 L11.5 11.5 M11.5 1.5 L1.5 11.5" stroke="#555" stroke-width="2.7"/></svg>
<div class="r" style="left:249px;top:360px;width:1220px;height:1px;background:#8c8c8c;"></div>
<div class="r" style="left:1432px;top:333px;width:1px;height:20px;background:#cccccc;"></div>
<svg class="r" style="left:1444.5px;top:339px;" width="13" height="9" viewBox="0 0 13 9"><path d="M1.5 1.5 L6.5 6.5 L11.5 1.5" fill="none" stroke="#c6c6c6" stroke-width="2.3"/></svg>
<div class="t" style="left:249.40px;top:373.84px;font-size:12px;color:#1b8bd0;">Pivots</div>
<div class="t" style="left:282.58px;top:373.65px;font-size:14px;color:#e3001b;font-weight:bold;">*</div>
<svg class="r" style="left:291.5px;top:374px;" width="10" height="10" viewBox="0 0 10 10"><circle cx="5" cy="5" r="5" fill="#1b8bd0"/><rect x="4.2" y="4.2" width="1.8" height="3.8" fill="#fff"/><circle cx="5.1" cy="2.5" r="0.95" fill="#fff"/></svg>
<div class="r" style="left:251px;top:388px;width:81px;height:30px;border-radius:15px;background:#e6e6e6;"></div>
<div class="t" style="left:259.50px;top:396.15px;font-size:14px;color:#333;">Name</div>
<svg class="r" style="left:306px;top:396.5px;" width="13" height="13" viewBox="0 0 13 13"><path d="M1.5 1.5 L11.5 11.5 M11.5 1.5 L1.5 11.5" stroke="#555" stroke-width="2.7"/></svg>
<div class="r" style="left:336px;top:388px;width:155.5px;height:30px;border-radius:15px;background:#e6e6e6;"></div>
<div class="t" style="left:344.50px;top:396.15px;font-size:14px;color:#333;">Application Name</div>
<svg class="r" style="left:465.5px;top:396.5px;" width="13" height="13" viewBox="0 0 13 13"><path d="M1.5 1.5 L11.5 11.5 M11.5 1.5 L1.5 11.5" stroke="#555" stroke-width="2.7"/></svg>
<div class="r" style="left:249px;top:419px;width:1220px;height:2px;background:#0a89cf;"></div>
<div class="r" style="left:1432px;top:393px;width:1px;height:20px;background:#cccccc;"></div>
<svg class="r" style="left:1444.5px;top:399px;" width="13" height="9" viewBox="0 0 13 9"><path d="M1.5 1.5 L6.5 6.5 L11.5 1.5" fill="none" stroke="#4a4a4a" stroke-width="2.3"/></svg>
<div class="t" style="left:249.50px;top:623.06px;font-size:16px;color:#333;">Pages &amp; Clicks</div>
<div class="r" style="left:249px;top:647px;width:1220px;height:1px;background:#8c8c8c;"></div>
<div class="t" style="left:249.40px;top:664.84px;font-size:12px;color:#777;">Unit</div>
<div class="t" style="left:251.00px;top:686.46px;font-size:16px;color:#999;">Select...</div>
<div class="r" style="left:249px;top:711px;width:1220px;height:1px;background:#8c8c8c;"></div>
<div class="r" style="left:1432px;top:684px;width:1px;height:20px;background:#cccccc;"></div>
<svg class="r" style="left:1444.5px;top:690px;" width="13" height="9" viewBox="0 0 13 9"><path d="M1.5 1.5 L6.5 6.5 L11.5 1.5" fill="none" stroke="#c6c6c6" stroke-width="2.3"/></svg>
<div class="t" style="left:249.40px;top:728.84px;font-size:12px;color:#777;">Decimal Places</div>
<svg class="r" style="left:336.091px;top:729px;" width="10" height="10" viewBox="0 0 10 10"><circle cx="5" cy="5" r="5" fill="#666"/><rect x="4.2" y="4.2" width="1.8" height="3.8" fill="#fff"/><circle cx="5.1" cy="2.5" r="0.95" fill="#fff"/></svg>
<div class="t" style="left:249.40px;top:744.16px;font-size:16px;color:#333;">1</div>
<div class="r" style="left:249px;top:768px;width:1220px;height:1px;background:#8c8c8c;"></div>
<div class="t" style="left:249.40px;top:785.84px;font-size:12px;color:#777;">Portlet Filters</div>
<div class="r" style="left:249px;top:825px;width:1220px;height:1px;background:#8c8c8c;"></div>
<div class="r" style="left:250px;top:850px;width:18px;height:18px;border-radius:2px;background:#0786c8;"></div>
<svg class="r" style="left:250px;top:850px;" width="18" height="18" viewBox="0 0 18 18"><path d="M3.8 9.2 L7.3 12.6 L14.3 5.4" fill="none" stroke="#fff" stroke-width="2.3"/></svg>
<div class="t" style="left:280.00px;top:851.46px;font-size:16px;color:#333;">Show SLA Column</div>
<div class="r" style="left:243px;top:889px;width:1231px;height:211px;background:#f8f8f8;border-radius:4px;"></div>
<div class="r" style="left:249px;top:896px;width:1220px;height:198px;background:#fff;border-radius:4px;box-shadow:0 0 1px rgba(0,0,0,0.06);"></div>
<div class="t" style="left:262.00px;top:904.61px;font-size:17px;color:#3d3d3d;transform:scaleX(0.9771);transform-origin:left top;">Portlet Preview</div>
<svg class="r" style="left:387px;top:906px;" width="13" height="13" viewBox="0 0 13 13"><circle cx="6.5" cy="6.5" r="6.5" fill="#666"/><rect x="5.5" y="5.4" width="2.2" height="4.8" fill="#fff"/><circle cx="6.6" cy="3.3" r="1.2" fill="#fff"/></svg>
<div class="t" style="left:254.80px;top:938.54px;font-size:12px;color:#333;font-weight:bold;transform:scaleX(0.8678);transform-origin:left top;">BY SLA</div>
<svg class="r" style="left:296.5px;top:939px;" width="8" height="12" viewBox="0 0 8 12"><path d="M0.5 5 L4 1 L7.5 5 Z" fill="#bbb"/><path d="M0.5 7 L4 11 L7.5 7 Z" fill="#bbb"/></svg>
<div class="t" style="left:559.30px;top:938.54px;font-size:12px;color:#333;font-weight:bold;transform:scaleX(0.9584);transform-origin:left top;">NAME &gt; APPLICATION NAME</div>
<svg class="r" style="left:724.5px;top:939px;" width="8" height="12" viewBox="0 0 8 12"><path d="M0.5 5 L4 1 L7.5 5 Z" fill="#bbb"/><path d="M0.5 7 L4 11 L7.5 7 Z" fill="#bbb"/></svg>
<div class="t" style="left:988.83px;top:938.54px;font-size:12px;color:#333;font-weight:bold;">#</div>
<svg class="r" style="left:999px;top:939px;" width="8" height="12" viewBox="0 0 8 12"><path d="M0.5 5 L4 1 L7.5 5 Z" fill="#bbb"/><path d="M0.5 7 L4 11 L7.5 7 Z" fill="#bbb"/></svg>
<div class="t" style="left:1037.93px;top:938.54px;font-size:12px;color:#333;font-weight:bold;transform:scaleX(0.9492);transform-origin:right top;">P 99 DURATION (S)</div>
<svg class="r" style="left:1151.5px;top:939px;" width="8" height="12" viewBox="0 0 8 12"><path d="M0.5 5 L4 1 L7.5 5 Z" fill="#bbb"/><path d="M0.5 7 L4 11 L7.5 7 Z" fill="#111"/></svg>
<div class="t" style="left:1188.73px;top:938.54px;font-size:12px;color:#333;font-weight:bold;transform:scaleX(0.9663);transform-origin:right top;">MAX DURATION (S)</div>
<svg class="r" style="left:1304px;top:939px;" width="8" height="12" viewBox="0 0 8 12"><path d="M0.5 5 L4 1 L7.5 5 Z" fill="#bbb"/><path d="M0.5 7 L4 11 L7.5 7 Z" fill="#bbb"/></svg>
<div class="t" style="left:1328.94px;top:938.54px;font-size:12px;color:#333;font-weight:bold;transform:scaleX(0.9591);transform-origin:right top;">TOTAL DURATION (S)</div>
<svg class="r" style="left:1456.5px;top:939px;" width="8" height="12" viewBox="0 0 8 12"><path d="M0.5 5 L4 1 L7.5 5 Z" fill="#bbb"/><path d="M0.5 7 L4 11 L7.5 7 Z" fill="#bbb"/></svg>
<svg class="r" style="left:545px;top:955px;" width="9" height="9" viewBox="0 0 9 9"><path d="M0.5 8.5 L8.5 0.5 M4.5 8.5 L8.5 4.5" stroke="#333" stroke-width="0.9"/></svg>
<svg class="r" style="left:850px;top:955px;" width="9" height="9" viewBox="0 0 9 9"><path d="M0.5 8.5 L8.5 0.5 M4.5 8.5 L8.5 4.5" stroke="#333" stroke-width="0.9"/></svg>
<svg class="r" style="left:1003px;top:955px;" width="9" height="9" viewBox="0 0 9 9"><path d="M0.5 8.5 L8.5 0.5 M4.5 8.5 L8.5 4.5" stroke="#333" stroke-width="0.9"/></svg>
<svg class="r" style="left:1155px;top:955px;" width="9" height="9" viewBox="0 0 9 9"><path d="M0.5 8.5 L8.5 0.5 M4.5 8.5 L8.5 4.5" stroke="#333" stroke-width="0.9"/></svg>
<svg class="r" style="left:1308px;top:955px;" width="9" height="9" viewBox="0 0 9 9"><path d="M0.5 8.5 L8.5 0.5 M4.5 8.5 L8.5 4.5" stroke="#333" stroke-width="0.9"/></svg>
<svg class="r" style="left:1460px;top:955px;" width="9" height="9" viewBox="0 0 9 9"><path d="M0.5 8.5 L8.5 0.5 M4.5 8.5 L8.5 4.5" stroke="#333" stroke-width="0.9"/></svg>
<div class="r" style="left:250px;top:964px;width:1219px;height:1px;background:#e6e6e6;"></div>
<div class="r" style="left:252px;top:969px;width:297px;height:14px;background:#fed23c;"></div>
<div class="t" style="left:557.50px;top:971.84px;font-size:12px;color:#333;width:300.50px;height:1.45em;overflow:hidden;">Navigation How To JS Animate &gt; Generic</div>
<div class="t" style="left:993.65px;top:971.84px;font-size:12px;color:#333;">44</div>
<div class="t" style="left:1118.97px;top:971.84px;font-size:12px;color:#333;">7,171.1</div>
<div class="t" style="left:1271.47px;top:971.84px;font-size:12px;color:#333;">7,171.1</div>
<div class="t" style="left:1408.29px;top:971.84px;font-size:12px;color:#333;">70,701.4</div>
<div class="r" style="left:250px;top:991px;width:1209px;height:1px;background:#e8e8e8;"></div>
<div class="r" style="left:252px;top:996px;width:297px;height:14px;background:#fed23c;"></div>
<div class="r" style="left:252px;top:996px;width:66px;height:14px;background:#8cf58c;"></div>
<div class="t" style="left:557.50px;top:998.84px;font-size:12px;color:#333;width:300.50px;height:1.45em;overflow:hidden;">none &gt; Generic</div>
<div class="t" style="left:1000.33px;top:998.84px;font-size:12px;color:#333;">9</div>
<div class="t" style="left:1118.97px;top:998.84px;font-size:12px;color:#333;">6,782.1</div>
<div class="t" style="left:1271.47px;top:998.84px;font-size:12px;color:#333;">6,782.1</div>
<div class="t" style="left:1409.18px;top:998.84px;font-size:12px;color:#333;">11,517.4</div>
<div class="r" style="left:250px;top:1018px;width:1209px;height:1px;background:#e8e8e8;"></div>
<div class="r" style="left:252px;top:1023px;width:297px;height:14px;background:#fed23c;"></div>
<div class="t" style="left:557.50px;top:1025.84px;font-size:12px;color:#333;width:300.50px;height:1.45em;overflow:hidden;">Navigation The Best Cool JavaScript Animations to Use on Your Website</div>
<div class="t" style="left:1000.33px;top:1025.84px;font-size:12px;color:#333;">5</div>
<div class="t" style="left:1118.97px;top:1025.84px;font-size:12px;color:#333;">1,636.1</div>
<div class="t" style="left:1271.47px;top:1025.84px;font-size:12px;color:#333;">1,636.1</div>
<div class="t" style="left:1414.97px;top:1025.84px;font-size:12px;color:#333;">3,381.3</div>
<div class="r" style="left:250px;top:1045px;width:1209px;height:1px;background:#e8e8e8;"></div>
<div class="r" style="left:252px;top:1050px;width:297px;height:14px;background:#fed23c;"></div>
<div class="t" style="left:557.50px;top:1052.84px;font-size:12px;color:#333;width:300.50px;height:1.45em;overflow:hidden;">Navigation Animated Frame Slideshow | Demo 2 | Codrops</div>
<div class="t" style="left:1000.33px;top:1052.84px;font-size:12px;color:#333;">1</div>
<div class="t" style="left:1128.97px;top:1052.84px;font-size:12px;color:#333;">100.0</div>
<div class="t" style="left:1281.47px;top:1052.84px;font-size:12px;color:#333;">100.0</div>
<div class="t" style="left:1424.97px;top:1052.84px;font-size:12px;color:#333;">100.0</div>
<div class="r" style="left:250px;top:1072px;width:1209px;height:1px;background:#e8e8e8;"></div>
<div class="r" style="left:252px;top:1077px;width:297px;height:14px;background:#fed23c;"></div>
<div class="t" style="left:557.50px;top:1079.84px;font-size:12px;color:#333;width:300.50px;height:1.45em;overflow:hidden;">logon &gt; Germain APM Workspace</div>
<div class="t" style="left:1000.33px;top:1079.84px;font-size:12px;color:#333;">1</div>
<div class="t" style="left:1135.65px;top:1079.84px;font-size:12px;color:#333;">12.3</div>
<div class="t" style="left:1288.15px;top:1079.84px;font-size:12px;color:#333;">12.3</div>
<div class="t" style="left:1431.65px;top:1079.84px;font-size:12px;color:#333;">12.3</div>
<div class="r" style="left:1459px;top:965px;width:10px;height:129px;border:1px solid #dedede;border-radius:5px;box-sizing:border-box;background:linear-gradient(90deg,#f4f4f4,#fdfdfd 40%,#f0f0f0);"></div>
<div class="r" style="left:1459px;top:965px;width:10px;height:36px;border:1px solid #cfcfcf;border-radius:5px;box-sizing:border-box;background:#f1f1f1;"></div>
<div class="r" style="left:248px;top:429px;width:1220px;height:190px;background:#fff;box-shadow:0 1px 2px rgba(0,0,0,0.25);"></div>
<div class="r" style="left:248px;top:429px;width:1211px;height:36px;background:#ebebeb;"></div>
<div class="t" style="left:265.00px;top:440.16px;font-size:16px;color:#333;transform:scaleX(0.9599);transform-origin:left top;">Access</div>
<div class="t" style="left:265.00px;top:476.16px;font-size:16px;color:#333;transform:scaleX(1.0621);transform-origin:left top;">Application Component</div>
<div class="t" style="left:265.00px;top:512.16px;font-size:16px;color:#333;transform:scaleX(1.0242);transform-origin:left top;">Business Object</div>
<div class="t" style="left:265.00px;top:548.16px;font-size:16px;color:#333;transform:scaleX(1.0427);transform-origin:left top;">Campaign Content</div>
<div class="t" style="left:265.00px;top:584.16px;font-size:16px;color:#333;transform:scaleX(1.0479);transform-origin:left top;">Campaign Medium</div>
<div class="r" style="left:1459px;top:429px;width:10px;height:190px;border:1px solid #dedede;border-radius:5px;box-sizing:border-box;background:linear-gradient(90deg,#f4f4f4,#fdfdfd 40%,#f0f0f0);"></div>
<div class="r" style="left:1459px;top:429px;width:10px;height:24px;border:1px solid #cfcfcf;border-radius:5px;box-sizing:border-box;background:#f1f1f1;"></div>
<div class="r" style="left:228px;top:360px;width:270px;height:255px;border:5px solid #02a2e8;border-radius:17px;box-sizing:border-box;"></div>
<div class="r" style="left:219px;top:1116px;width:1280px;height:1px;background:#e3e3e3;"></div>
<div class="r" style="left:1344px;top:1125px;width:75px;height:36px;border-radius:3px;background:#e6e6e6;box-shadow:0 1px 2px rgba(0,0,0,0.3);"></div>
<div class="t" style="left:1359.40px;top:1135.98px;font-size:14.2px;color:#333;">Cancel</div>
<div class="r" style="left:1427px;top:1125px;width:64px;height:36px;border-radius:3px;background:#e8e8e8;"></div>
<div class="t" style="left:1442.82px;top:1135.98px;font-size:14.2px;color:#aaa;">Save</div>
</body></html>
